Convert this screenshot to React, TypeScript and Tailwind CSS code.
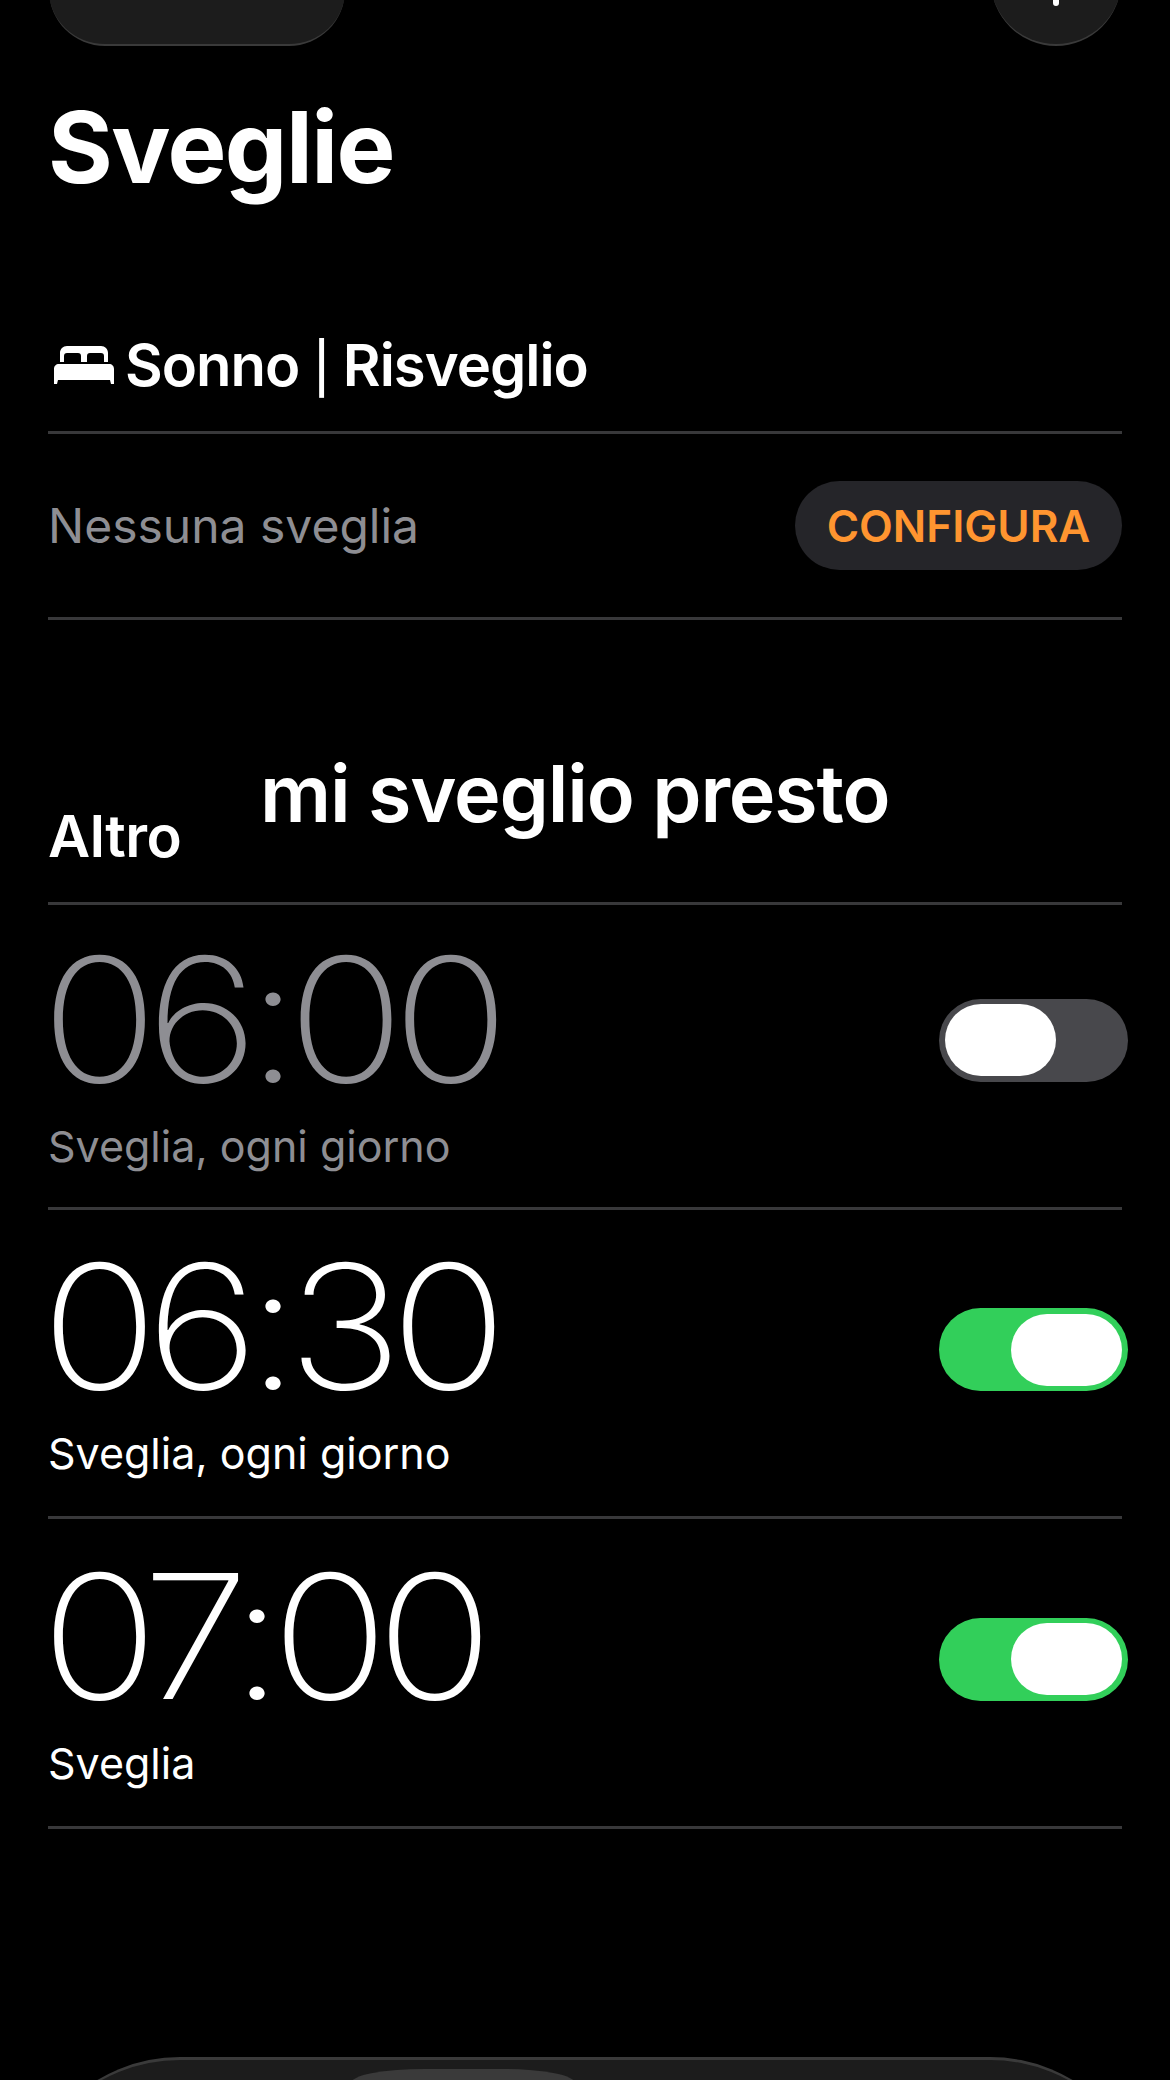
const font = { fontFamily: 'Inter, "Liberation Sans", sans-serif' };

function Toggle({ on, mb }: { on: boolean; mb: string }) {
  return (
    <div
      className={`flex h-[83px] w-[189px] -mr-[6px] shrink-0 items-center rounded-full px-[6px] ${mb} ${
        on ? "justify-end bg-[#32cf5a]" : "justify-start bg-[#48484c]"
      }`}
    >
      <div className="h-[72px] w-[111px] rounded-full bg-white" />
    </div>
  );
}

function Alarm({ time, label, on, h, mb }: { time: string; label: string; on: boolean; h: string; mb: string }) {
  return (
    <div className={`flex items-center justify-between border-b-[3px] border-[#38383a] ${h}`}>
      <div className={`mb-[10px] ${on ? "text-white" : "text-[#8e8e93]"}`}>
        <div className="-ml-[7px] origin-left scale-x-[1.12] text-[173px] font-extralight leading-[178px] tracking-[-11px]">
          {time}
        </div>
        <div className="mt-[12px] text-[43px] leading-[52px]">{label}</div>
      </div>
      <Toggle on={on} mb={mb} />
    </div>
  );
}

export default function App() {
  return (
    <div style={font} className="relative h-[2080px] w-[1170px] overflow-hidden bg-black text-white">
      <div className="-mt-[84px] flex items-start justify-between pl-[49px] pr-[49px]">
        <div className="flex h-[130px] w-[296px] items-end justify-center rounded-[56px] border-b-2 border-[#3a3a3a] bg-[#1c1c1c] pb-[80px]">
          <svg width="130" height="6" viewBox="0 0 130 6" fill="#8a8a8a" className="ml-[-6px]">
            <rect x="0" y="0" width="7" height="3" rx="1.5" />
            <rect x="27" y="0" width="7" height="3" rx="1.5" />
            <rect x="102" y="0" width="7" height="3" rx="1.5" />
            <rect x="125" y="0" width="5" height="3" rx="1.5" />
          </svg>
        </div>
        <div className="flex h-[130px] w-[130px] items-center justify-center rounded-full border-b-2 border-[#3a3a3a] bg-[#1c1c1c] pb-[4px]">
          <svg width="56" height="56" viewBox="0 0 56 56" stroke="white" strokeWidth="6" strokeLinecap="round">
            <path d="M28 3v50M3 28h50" />
          </svg>
        </div>
      </div>

      <div className="px-[48px]">
        <h1 className="mt-[41px] text-[99px] font-bold leading-[120px] tracking-[-1.5px]">Sveglie</h1>

        <div className="mt-[127px] flex h-[100px] items-center gap-[11px] border-b-[3px] border-[#38383a] pb-[35px] pl-[6px]">
          <svg width="60" height="38" viewBox="0 0 60 38" fill="white" className="shrink-0">
            <path d="M6 16V7c0-4 3-7 7-7h34c4 0 7 3 7 7v9h-4v-6c0-2-1-3-3-3H36c-2 0-3 1-3 3v6h-6v-6c0-2-1-3-3-3H13c-2 0-3 1-3 3v6z" />
            <path d="M5 18h50c3 0 5 2 5 5v15h-3l-1-4H4l-1 4H0V23c0-3 2-5 5-5z" />
          </svg>
          <span className="text-[58px] font-semibold tracking-[-1px]">
            Sonno <span className="text-[50px] font-medium">|</span> Risveglio
          </span>
        </div>

        <div className="flex h-[186px] items-center justify-between border-b-[3px] border-[#38383a]">
          <span className="text-[48px] text-[#8e8e93]">Nessuna sveglia</span>
          <div className="flex h-[89px] w-[327px] items-center justify-center rounded-full bg-[#252529] text-[44px] font-semibold text-[#ff9530]">
            CONFIGURA
          </div>
        </div>

        <div className="flex h-[285px] items-end border-b-[3px] border-[#38383a] pb-[31px]">
          <span className="text-[58px] font-semibold leading-[70px] tracking-[-0.5px]">Altro</span>
        </div>

        <Alarm time="06:00" label="Sveglia, ogni giorno" on={false} h="h-[305px]" mb="mb-[32px]" />
        <Alarm time="06:30" label="Sveglia, ogni giorno" on h="h-[309px]" mb="mb-[27px]" />
        <Alarm time="07:00" label="Sveglia" on h="h-[310px]" mb="mb-[27px]" />
      </div>

      <div className="absolute left-[260px] top-[743px] text-[79px] font-semibold leading-[100px] tracking-[-1.2px]">
        mi sveglio presto
      </div>

      <div className="absolute left-[20px] right-[20px] top-[2057px] h-[340px] rounded-[160px] border-t-[3px] border-[#3a3a3a] bg-[#1c1c1c]">
        <div className="ml-[331px] mt-[9px] h-[40px] w-[224px] [border-radius:74px_74px_0_0/14px_14px_0_0] bg-[#3a3a3a]" />
      </div>
    </div>
  );
}
